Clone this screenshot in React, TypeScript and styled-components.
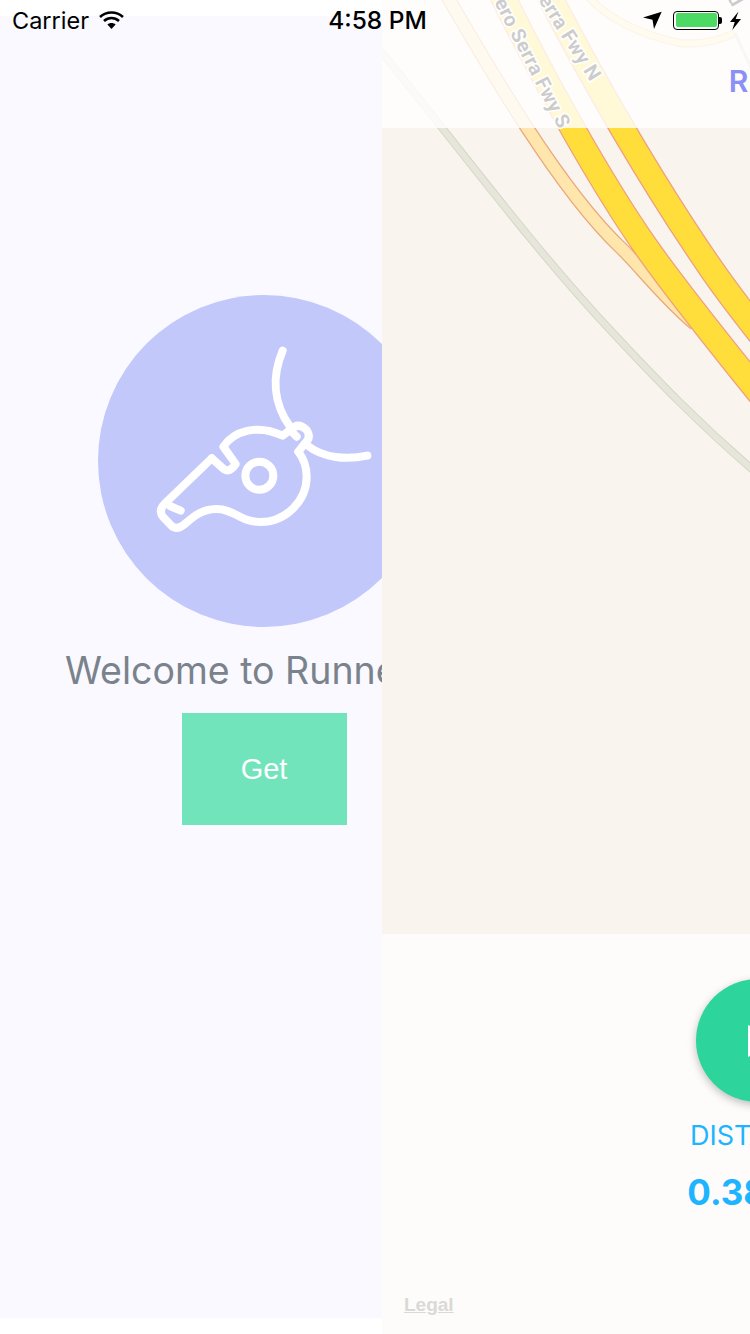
import React from 'react';
import styled, { createGlobalStyle } from 'styled-components';

const GlobalStyle = createGlobalStyle`
	html, body {
		margin: 0;
		padding: 0;
		background: #fff;
	}
	* {
		box-sizing: border-box;
	}
`;

const Screen = styled.div`
	position: relative;
	display: flex;
	width: 750px;
	height: 1334px;
	overflow: hidden;
	font-family: Inter, "Liberation Sans", sans-serif;
`;

const StatusBar = styled.div`
	position: absolute;
	top: 0;
	left: 0;
	right: 0;
	z-index: 5;
	height: 40px;
	padding: 0 9px 0 12px;
	display: grid;
	grid-template-columns: 1fr auto 1fr;
	align-items: center;
	color: #000;
	font-size: 23.5px;
`;

const StatusSide = styled.div<{ $end?: boolean }>`
	display: flex;
	align-items: center;
	justify-content: ${(p) => (p.$end ? 'flex-end' : 'flex-start')};
	gap: ${(p) => (p.$end ? '11px' : '10px')};
`;

const Clock = styled.div`
	font-weight: 500;
	font-size: 24.5px;
	transform: translateX(1px);
`;

const Battery = styled.div`
	position: relative;
	width: 46px;
	height: 19px;
	padding: 1.5px;
	border: 1px solid #000;
	border-radius: 4px;

	&::before {
		content: '';
		display: block;
		height: 100%;
		background: #4cd964;
		border-radius: 2px;
	}
	&::after {
		content: '';
		position: absolute;
		top: 5px;
		right: -4px;
		width: 3px;
		height: 7px;
		background: #000;
		border-radius: 0 2px 2px 0;
	}
`;

const WelcomePanel = styled.div`
	flex: 0 0 382px;
	padding: 16px 0;
	overflow: hidden;
`;

const WelcomeBody = styled.div`
	width: 528px;
	height: 100%;
	padding-top: 279px;
	display: flex;
	flex-direction: column;
	align-items: center;
	background: #f9f9ff;
`;

const LogoCircle = styled.div`
	width: 332px;
	height: 332px;
	border-radius: 50%;
	background: #c2c8fa;
`;

const WelcomeText = styled.div`
	align-self: flex-start;
	margin: 22px 0 0 65px;
	color: #7a828b;
	font-size: 37.5px;
	line-height: 44px;
	white-space: nowrap;
`;

const GetButton = styled.div`
	width: 165px;
	height: 112px;
	margin-top: 20px;
	display: flex;
	align-items: center;
	justify-content: center;
	background: #72e4bc;
	color: #fff;
	font-family: "Liberation Sans", Arial, sans-serif;
	font-size: 29px;
`;

const RunPanel = styled.div`
	position: relative;
	flex: 0 0 750px;
	height: 100%;
	display: flex;
	flex-direction: column;
	background: #f9f5ee;
`;

const MapLayer = styled.svg`
	position: absolute;
	top: 0;
	left: 0;
`;

const NavBar = styled.div`
	position: relative;
	height: 128px;
	padding-top: 61px;
	text-align: center;
	background: rgba(255, 255, 255, 0.8);
	color: #8b90f7;
	font-size: 30px;
	font-weight: 600;
	line-height: 40px;
`;

const MapArea = styled.div`
	flex: 1;
`;

const ControlPanel = styled.div`
	position: relative;
	height: 400px;
	padding-top: 45px;
	display: flex;
	flex-direction: column;
	align-items: center;
	background: #fdfcfa;
`;

const PlayButton = styled.div`
	width: 123px;
	height: 123px;
	padding-left: 12px;
	display: flex;
	align-items: center;
	justify-content: center;
	border-radius: 50%;
	background: #2dd59c;
	box-shadow: 0 3px 8px rgba(0, 0, 0, 0.25);
`;

const StatLabel = styled.div`
	margin-top: 17px;
	color: #1fb4ff;
	font-size: 27px;
	line-height: 34px;
`;

const StatValue = styled.div`
	margin-top: 18px;
	color: #1fb4ff;
	font-size: 35px;
	font-weight: 700;
	line-height: 42px;
`;

const LegalLink = styled.div`
	position: absolute;
	left: 22px;
	bottom: 18px;
	color: #d9d9d7;
	font-family: "Liberation Sans", Arial, sans-serif;
	font-size: 19px;
	font-weight: 700;
	text-decoration: underline;
`;

const RoadLabel = styled.text`
	fill: #000;
	font-family: Roboto, sans-serif;
	font-size: 20px;
	font-weight: 700;
	letter-spacing: 0.2px;
	stroke: #fff;
	stroke-width: 3px;
	paint-order: stroke;
`;

const Whistle = () => (
	<svg width="332" height="332" viewBox="24 15 996 996" fill="none" stroke="#fff" strokeWidth="24" strokeLinecap="round" strokeLinejoin="round">
		<path d="M365 505 L225 640 Q203 662 220 682 L243 706 Q260 722 282 704 C312 678 335 658 378 657 C430 655 450 696 510 696 C590 696 650 630 650 560 C650 530 640 505 625 485" />
		<path d="M365 505 L402 538 Q420 548 437 522 L400 470 C430 425 500 400 578 437 L600 420 Q625 395 650 420 Q665 442 645 460 L625 485" />
		<path d="M600 420 L620 440" />
		<path d="M240 648 L272 662" />
		<circle cx="508" cy="557" r="42" />
		<path d="M578 182 C545 260 550 340 600 410" />
		<path d="M650 465 C700 505 770 510 832 497" />
	</svg>
);

const greyRoad = 'M370 38 C450 135 530 245 613 333 C655 378 700 425 760 476';
const rampRoad = 'M447 -4 C490 70 560 190 620 247 C640 266 662 296 695 324';
const southRoad = 'M502 -5 C545 82 600 181 646 247 C680 295 722 347 760 394';
const northRoad = 'M549 -5 C590 75 650 180 710 267 C727 292 743 312 760 334';
const cloverRoad = 'M587 -5 C605 17 640 35 680 43 C700 45 720 40 735 33';

const RoadMap = () => (
	<MapLayer width="750" height="1334" viewBox="382 0 750 1334" fill="none">
		<path d={cloverRoad} stroke="#eebf8c" strokeWidth="8" />
		<path d={cloverRoad} stroke="#fde9b0" strokeWidth="6" />
		<path d="M735 33 L752 70" stroke="#d6d6c8" strokeWidth="3" />
		<path d={greyRoad} stroke="#d6d6c8" strokeWidth="8" />
		<path d={greyRoad} stroke="#e6e6da" strokeWidth="6" />
		<path d={rampRoad} stroke="#e9a87a" strokeWidth="14" />
		<path d={rampRoad} stroke="#fee6ad" strokeWidth="11.5" />
		<path d={southRoad} stroke="#ee9f80" strokeWidth="26" />
		<path d={southRoad} stroke="#ffde3c" strokeWidth="23.5" />
		<path d={northRoad} stroke="#ee9f80" strokeWidth="26" />
		<path d={northRoad} stroke="#ffde3c" strokeWidth="23.5" />
		<RoadLabel transform="translate(494 2) rotate(63)">ero Serra Fwy S</RoadLabel>
		<RoadLabel transform="translate(538 0) rotate(57.5)">erra Fwy N</RoadLabel>
		<RoadLabel transform="translate(727 -2) rotate(60)">d</RoadLabel>
	</MapLayer>
);

const App = () => {
	return (
		<>
			<GlobalStyle />
			<Screen>
				<StatusBar>
					<StatusSide>
						Carrier
						<svg width="25" height="18" viewBox="0 0 25 18" fill="none" stroke="#000" strokeWidth="2.6">
							<path d="M1 6 C7.5 0 17.5 0 24 6" />
							<path d="M5 10 C9.5 6 15.5 6 20 10" />
							<path d="M12.5 18 L8.4 13.6 C10.5 11.6 14.5 11.6 16.6 13.6 Z" fill="#000" stroke="none" />
						</svg>
					</StatusSide>
					<Clock>4:58 PM</Clock>
					<StatusSide $end>
						<svg width="19" height="19" viewBox="0 0 19 19">
							<path d="M18.7 0.8 L11 18 L9.5 8.8 L0 6.5 Z" fill="#000" />
						</svg>
						<Battery />
						<svg width="11" height="19" viewBox="0 0 11 19">
							<path d="M8.5 0.5 L0 11 L4.7 11 L2.3 19 L11 8 L5.7 8 Z" fill="#000" />
						</svg>
					</StatusSide>
				</StatusBar>

				<WelcomePanel>
					<WelcomeBody>
						<LogoCircle>
							<Whistle />
						</LogoCircle>
						<WelcomeText>Welcome to Runner</WelcomeText>
						<GetButton>Get</GetButton>
					</WelcomeBody>
				</WelcomePanel>

				<RunPanel>
					<RoadMap />
					<NavBar>Run</NavBar>
					<MapArea />
					<ControlPanel>
						<PlayButton>
							<svg width="34" height="36" viewBox="0 0 34 36">
								<path d="M2 2 L32 18 L2 34 Z" fill="#fff" />
							</svg>
						</PlayButton>
						<StatLabel>DISTANCE</StatLabel>
						<StatValue>0.38 km</StatValue>
						<LegalLink>Legal</LegalLink>
					</ControlPanel>
				</RunPanel>
			</Screen>
		</>
	);
};

export default App;
